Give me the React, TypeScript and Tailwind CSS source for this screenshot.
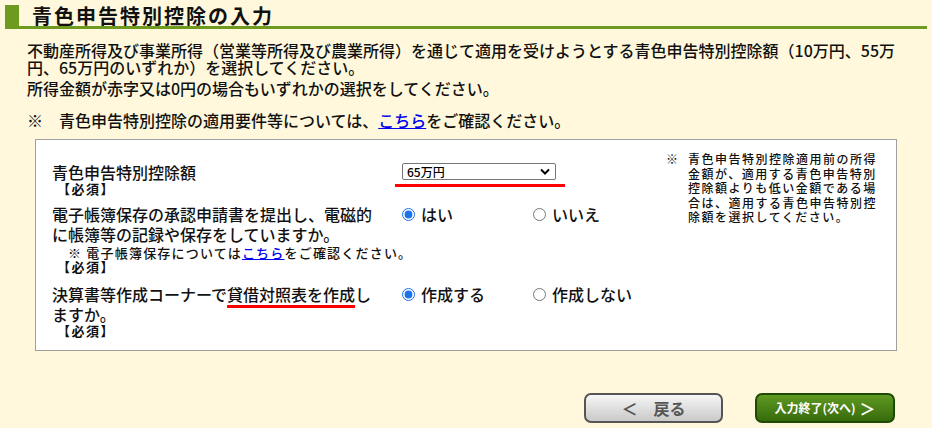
import { useState } from "react";

const jp = "font-['Noto_Sans_CJK_JP',sans-serif]";

function Radio({
  name,
  checked,
  onChange,
  label,
}: {
  name: string;
  checked: boolean;
  onChange: () => void;
  label: string;
}) {
  return (
    <label className="flex items-center gap-[6px] text-[16px] leading-[20px]">
      <input
        type="radio"
        name={name}
        checked={checked}
        onChange={onChange}
        className="m-0 h-[13px] w-[13px] accent-[#1a73e8]"
      />
      <span>{label}</span>
    </label>
  );
}

function Required() {
  return (
    <div className="pl-[5px] text-[13px] font-bold leading-[14px] tracking-[1.5px]">【必須】</div>
  );
}

export default function App() {
  const [amount, setAmount] = useState("65");
  const [ebook, setEbook] = useState("yes");
  const [bs, setBs] = useState("yes");

  return (
    <div className={`${jp} min-h-screen bg-[#fff8dc] font-medium text-[#111]`}>
      {/* 見出し */}
      <div className="px-[5px] pt-[5px]">
        <div className="flex items-stretch border-b-[3px] border-[#6e9b1f]">
          <div className="h-[21px] w-[14px] bg-[#6e9b1f]" />
          <h1 className="ml-[13px] text-[20px] font-bold leading-[21px] tracking-[2px]">
            青色申告特別控除の入力
          </h1>
        </div>
      </div>

      <div className="px-[27px] pt-[13px] text-[16px]">
        <p className="leading-[17px]">
          不動産所得及び事業所得（営業等所得及び農業所得）を通じて適用を受けようとする青色申告特別控除額（10万円、55万
          <br />
          円、65万円のいずれか）を選択してください。
        </p>
        <p className="mt-[4px] leading-[17px]">
          所得金額が赤字又は0円の場合もいずれかの選択をしてください。
        </p>
        <p className="mt-[15px] leading-[17px]">
          ※　青色申告特別控除の適用要件等については、
          <a href="#" className="text-[#0000ee] underline">
            こちら
          </a>
          をご確認ください。
        </p>
      </div>

      {/* 入力欄 */}
      <div className="ml-[35px] mt-[10px] flex h-[212px] w-[862px] border border-[#a0a0a0] bg-white pl-[16px]">
        <div className="flex w-[614px] flex-col pt-[22px]">
          {/* 行1 */}
          <div className="flex">
            <div className="w-[330px]">
              <div className="text-[16px] leading-[20px]">青色申告特別控除額</div>
              <Required />
            </div>
            <div className="ml-[20px] pt-[1px]">
              <div className="relative h-[17px] w-[154px]">
                <select
                  value={amount}
                  onChange={(e) => setAmount(e.target.value)}
                  className="block h-[17px] w-[154px] appearance-none rounded-[2px] border border-[#767676] bg-white py-0 pl-[4px] text-[12px] leading-[15px] text-black"
                >
                  <option value="10">10万円</option>
                  <option value="55">55万円</option>
                  <option value="65">65万円</option>
                </select>
                <svg
                  className="pointer-events-none absolute right-[6px] top-[5px]"
                  width="10"
                  height="8"
                  viewBox="0 0 10 8"
                >
                  <path d="M1 1.5 L5 5.5 L9 1.5" fill="none" stroke="#000" strokeWidth="2" />
                </svg>
              </div>
              <div className="-ml-[7px] mt-[4px] h-[3px] w-[170px] bg-[#ff0000]" />
            </div>
          </div>

          {/* 行2 */}
          <div className="mt-[8px] flex">
            <div className="w-[330px]">
              <div className="text-[16px] leading-[20px]">
                電子帳簿保存の承認申請書を提出し、電磁的に帳簿等の記録や保存をしていますか。
              </div>
              <div className="ml-[16px] whitespace-nowrap pt-[1px] text-[13px] leading-[15px] tracking-[1.2px]">
                ※ 電子帳簿保存については
                <a href="#" className="text-[#0000ee] underline">
                  こちら
                </a>
                をご確認ください。
              </div>
              <Required />
            </div>
            <div className="ml-[20px] flex items-start">
              <div className="w-[131px]">
                <Radio name="ebook" label="はい" checked={ebook === "yes"} onChange={() => setEbook("yes")} />
              </div>
              <Radio name="ebook" label="いいえ" checked={ebook === "no"} onChange={() => setEbook("no")} />
            </div>
          </div>

          {/* 行3 */}
          <div className="mt-[10px] flex">
            <div className="w-[330px]">
              <div className="text-[16px] leading-[20px]">
                決算書等作成コーナーで
                <span className="underline decoration-[#ff0000] decoration-[3px] underline-offset-[4px]">
                  貸借対照表を作成
                </span>
                しますか。
              </div>
              <Required />
            </div>
            <div className="ml-[20px] flex items-start">
              <div className="w-[131px]">
                <Radio name="bs" label="作成する" checked={bs === "yes"} onChange={() => setBs("yes")} />
              </div>
              <Radio name="bs" label="作成しない" checked={bs === "no"} onChange={() => setBs("no")} />
            </div>
          </div>
        </div>

        {/* 注記 */}
        <div className="flex pt-[12px] text-[12px] leading-[14.5px] tracking-[1.5px]">
          <div className="w-[22px]">※</div>
          <div className="w-[195px]">
            青色申告特別控除適用前の所得金額が、適用する青色申告特別控除額よりも低い金額である場合は、適用する青色申告特別控除額を選択してください。
          </div>
        </div>
      </div>

      {/* ボタン */}
      <div className="mt-[42px] flex gap-[32px] pl-[584px]">
        <button
          type="button"
          className="flex h-[30px] w-[139px] items-center justify-center gap-[16px] rounded-[7px] border-2 border-[#555] bg-gradient-to-b from-[#f6f6f6] to-[#c9c9c9] text-[16px] font-bold text-[#555]"
        >
          <span>＜</span>
          <span>戻る</span>
        </button>
        <button
          type="button"
          className="flex h-[30px] w-[140px] items-center justify-center rounded-[7px] border-2 border-[#1f4a06] bg-gradient-to-b from-[#5f9a22] to-[#376b0c] text-[12px] font-bold text-white"
        >
          <span>入力終了(次へ)</span>
          <span className="ml-[4px] text-[16px]">＞</span>
        </button>
      </div>
    </div>
  );
}
